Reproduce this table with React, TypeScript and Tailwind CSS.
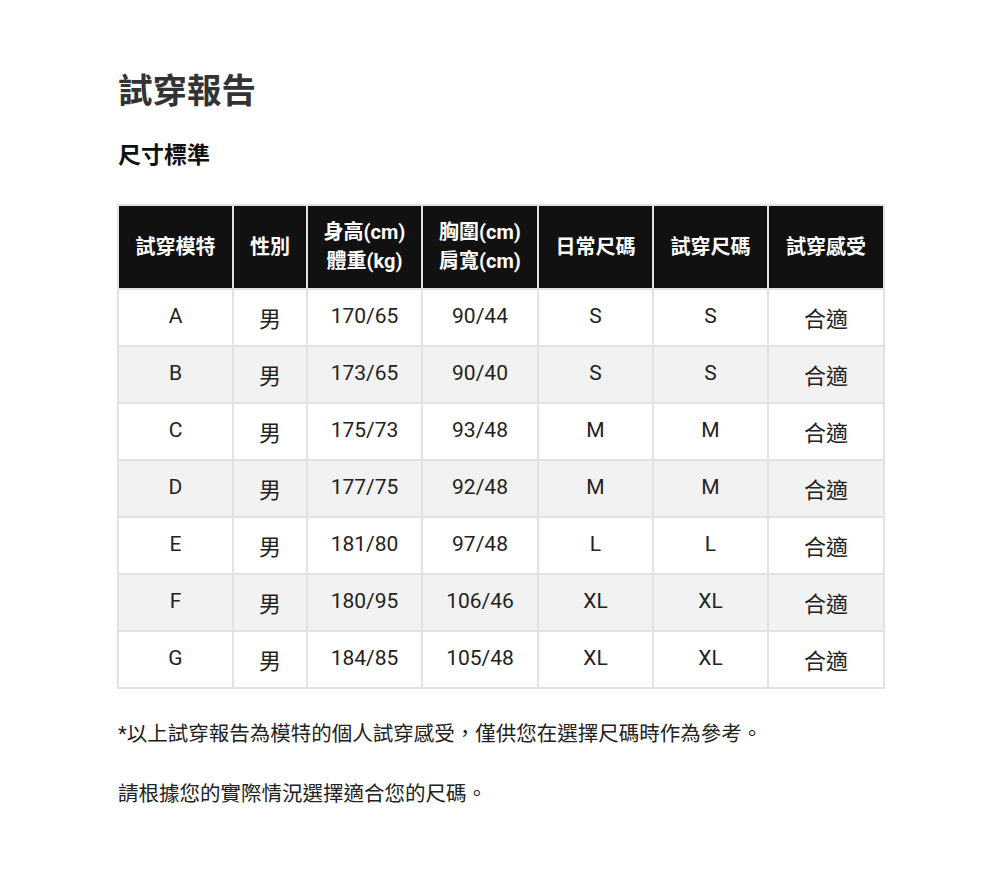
import React from "react";

const rows = [
  ["A", "男", "170/65", "90/44", "S", "S", "合適"],
  ["B", "男", "173/65", "90/40", "S", "S", "合適"],
  ["C", "男", "175/73", "93/48", "M", "M", "合適"],
  ["D", "男", "177/75", "92/48", "M", "M", "合適"],
  ["E", "男", "181/80", "97/48", "L", "L", "合適"],
  ["F", "男", "180/95", "106/46", "XL", "XL", "合適"],
  ["G", "男", "184/85", "105/48", "XL", "XL", "合適"],
];

const widths = ["w-[115px]", "w-[74px]", "w-[115px]", "w-[116px]", "w-[115px]", "w-[115px]", "w-[116px]"];

export default function App() {
  return (
    <div
      className="min-h-[887px] bg-white pl-[118px] pt-[65px] text-[#222]"
      style={{ fontFamily: 'Roboto, "Noto Sans CJK TC", sans-serif' }}
    >
      <h1 className="text-[34.5px] font-bold leading-[52px] text-[#333]">試穿報告</h1>
      <h2 className="mt-[23px] text-[23px] font-bold leading-[32px] text-[#111]">尺寸標準</h2>
      <table className="mt-[32px] ml-[-1px] w-[766px] table-fixed border-collapse border-2 border-[#e2e2e2]">
        <thead>
          <tr className="h-[84px] bg-[#111] text-white">
            <th className={`${widths[0]} border-2 border-[#e2e2e2] text-[20px] font-bold`}>試穿模特</th>
            <th className={`${widths[1]} border-2 border-[#e2e2e2] text-[20px] font-bold`}>性別</th>
            <th className={`${widths[2]} border-2 border-[#e2e2e2] text-[20px] font-bold leading-[29px]`}>
              身高(cm)
              <br />
              體重(kg)
            </th>
            <th className={`${widths[3]} border-2 border-[#e2e2e2] text-[20px] font-bold leading-[29px]`}>
              胸圍(cm)
              <br />
              肩寬(cm)
            </th>
            <th className={`${widths[4]} border-2 border-[#e2e2e2] text-[20px] font-bold`}>日常尺碼</th>
            <th className={`${widths[5]} border-2 border-[#e2e2e2] text-[20px] font-bold`}>試穿尺碼</th>
            <th className={`${widths[6]} border-2 border-[#e2e2e2] text-[20px] font-bold`}>試穿感受</th>
          </tr>
        </thead>
        <tbody>
          {rows.map((r, i) => (
            <tr key={i} className={`h-[57px] ${i % 2 === 1 ? "bg-[#f2f2f2]" : "bg-white"}`}>
              {r.map((c, j) => (
                <td
                  key={j}
                  className={`border-2 border-[#e2e2e2] text-center ${
                    j === 1 || j === 6 ? "pt-[4px] text-[22px]" : "pb-[2px] text-[21px]"
                  }`}
                >
                  {c}
                </td>
              ))}
            </tr>
          ))}
        </tbody>
      </table>
      <p className="mt-[30px] text-[20.5px] leading-[30px] text-[#222]">
        *以上試穿報告為模特的個人試穿感受，僅供您在選擇尺碼時作為參考。
      </p>
      <p className="mt-[30px] text-[20.5px] leading-[30px] text-[#222]">請根據您的實際情況選擇適合您的尺碼。</p>
    </div>
  );
}
